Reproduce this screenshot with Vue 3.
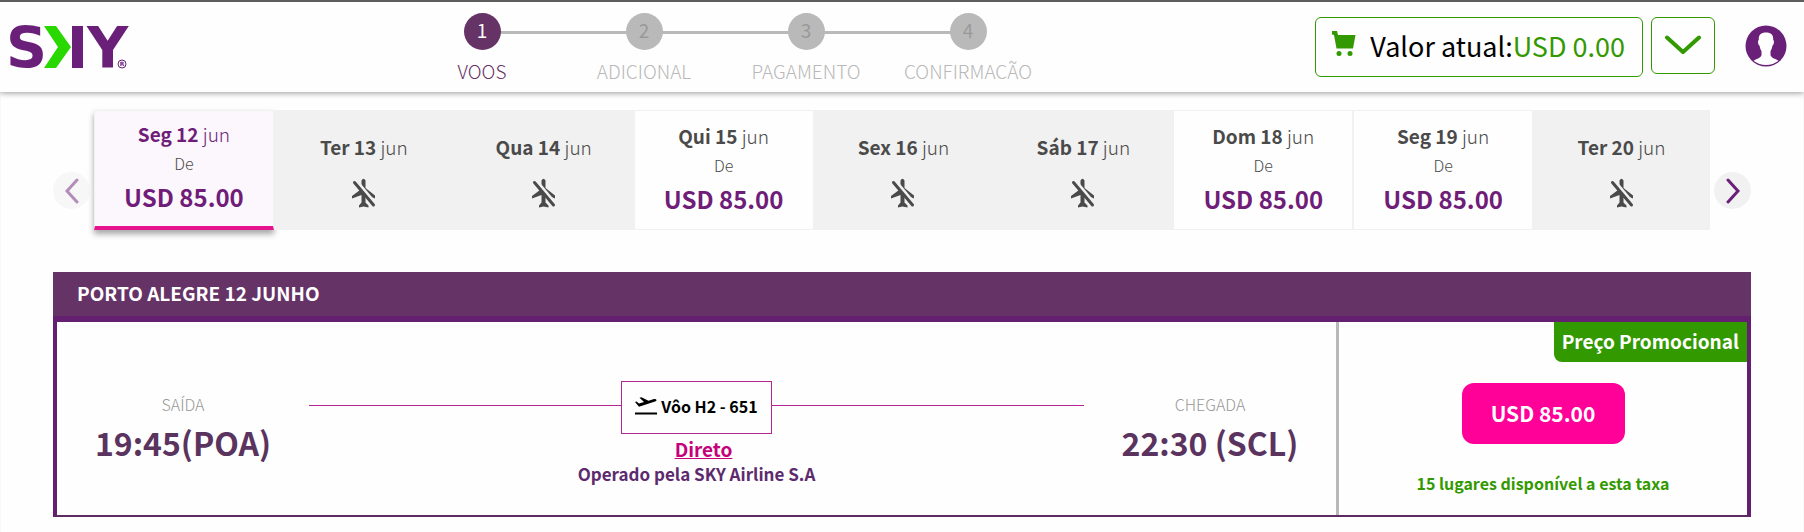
<script setup>
const steps = ['VOOS', 'ADICIONAL', 'PAGAMENTO', 'CONFIRMACÃO']

const days = [
  { day: 'Seg 12', price: 'USD 85.00', selected: true },
  { day: 'Ter 13' },
  { day: 'Qua 14' },
  { day: 'Qui 15', price: 'USD 85.00' },
  { day: 'Sex 16' },
  { day: 'Sáb 17' },
  { day: 'Dom 18', price: 'USD 85.00' },
  { day: 'Seg 19', price: 'USD 85.00' },
  { day: 'Ter 20' },
]
</script>

<template>
  <div class="page">
    <header class="header">
      <a class="logo" href="#" aria-label="SKY">
        <svg width="128" height="70" viewBox="-6 -10 128 70">
          <text x="-2" y="45" class="logo-letter">S</text>
          <path d="M36 3H48L63 24L48 45H36L50 24Z" fill="#28d800" />
          <rect x="64" y="3" width="11" height="42" fill="#6a1f78" />
          <text x="79" y="45" class="logo-letter">Y</text>
          <circle cx="114" cy="41" r="4" fill="#fff" stroke="#6a1f78" />
          <text x="114" y="43" class="logo-mark">R</text>
        </svg>
      </a>

      <ol class="steps">
        <li v-for="(step, i) in steps" :key="step" class="step" :class="{ active: i === 0 }">
          <span class="step-number">{{ i + 1 }}</span>
          <span class="step-label">{{ step }}</span>
        </li>
      </ol>

      <div class="actions">
        <div class="total">
          <svg class="cart" width="24" height="26" viewBox="0 0 24 26" fill="#339900">
            <path d="M0 0H5L6 4H23.5L21 17.5H4.5L2 4L0 3.5Z" />
            <circle cx="7" cy="22.500" r="2.500" />
            <circle cx="18" cy="22.500" r="2.500" />
          </svg>
          <span>Valor atual:<span class="amount">USD 0.00</span></span>
        </div>
        <button class="expand" type="button" aria-label="Detalhes">
          <svg width="38" height="21" viewBox="0 0 38 21" fill="none" stroke="#339900" stroke-width="4" stroke-linecap="round" stroke-linejoin="round">
            <path d="M3 2.500L19 17L35 2.500" />
          </svg>
        </button>
        <button class="avatar" type="button" aria-label="Conta">
          <svg width="42" height="42" viewBox="0 0 42 42">
            <circle cx="21" cy="21" r="20.500" fill="#6a1f78" />
            <path d="M21 7.500C26 7.500 28.500 9.500 28.200 15C29.500 15.500 29 20 27.500 20.500C27 23 26.500 25 25.500 26V30C26 33 30 33.500 33.500 35.800C26.500 41.500 15.500 41.500 8.500 35.800C12 33.500 16 33 16.500 30V26C15.500 25 15 23 14.500 20.500C13 20 12.500 15.500 13.800 15C13.500 9.500 16 7.500 21 7.500Z" fill="#fff" />
          </svg>
        </button>
      </div>
    </header>

    <main class="content">
      <section class="carousel">
        <button class="arrow faded" type="button" aria-label="Dias anteriores">
          <svg width="14" height="26" viewBox="0 0 14 26" fill="none" stroke="#6a1f78" stroke-width="3" stroke-linecap="round"><path d="M12 2L2 13L12 24" /></svg>
        </button>
        <div class="days">
          <button
            v-for="d in days"
            :key="d.day"
            type="button"
            class="day"
            :class="{ selected: d.selected, empty: !d.price }"
          >
            <span class="date"><b>{{ d.day }}</b> jun</span>
            <template v-if="d.price">
              <span class="from">De</span>
              <span class="fare">{{ d.price }}</span>
            </template>
            <svg v-else class="no-flight" width="26" height="30" viewBox="0 0 26 30" fill="#4a4a4a">
              <path d="M10.500 8V2.500Q12.500-1 14.500 2.500V10L24 17.500V20.500L14.500 16.500V24.500L17.500 27.500V29.500L12.500 28.500L8 29.500V27.500L10.500 24.500V17L1 20.500V18L9 12Z" />
              <path d="M5 3L25 27" stroke="#f1f1f1" stroke-width="4" />
              <path d="M3.500 4.500L22.500 27" stroke="#4a4a4a" stroke-width="3" stroke-linecap="round" />
            </svg>
          </button>
        </div>
        <button class="arrow" type="button" aria-label="Próximos dias">
          <svg width="14" height="26" viewBox="0 0 14 26" fill="none" stroke="#6a1f78" stroke-width="3" stroke-linecap="round"><path d="M2 2L12 13L2 24" /></svg>
        </button>
      </section>

      <section class="panel">
        <h2 class="panel-title">PORTO ALEGRE 12 JUNHO</h2>
        <div class="flight">
          <div class="itinerary">
            <div class="stop">
              <span class="stop-label">SAÍDA</span>
              <strong class="stop-time">19:45(POA)</strong>
            </div>
            <div class="route">
              <div class="route-line">
                <div class="flight-box">
                  <svg width="22" height="18" viewBox="0 0 22 18">
                    <path d="M0 15.500H22V17.500H0Z" />
                    <path d="M0 5L1.500 4.500L4 6.500L9 5L4.500 0.800L6.500 0.200L13.500 3.800L19 2Q21.500 1.800 21.500 3.200Q21.500 4 20 4.500L4 9.800Z" />
                  </svg>
                  <span>Vôo H2 - 651</span>
                </div>
              </div>
              <a class="direct" href="#">Direto</a>
              <span class="operator">Operado pela SKY Airline S.A</span>
            </div>
            <div class="stop">
              <span class="stop-label">CHEGADA</span>
              <strong class="stop-time">22:30 (SCL)</strong>
            </div>
          </div>
          <div class="price">
            <span class="promo">Preço Promocional</span>
            <button class="buy" type="button">USD 85.00</button>
            <span class="seats">15 lugares disponível a esta taxa</span>
          </div>
        </div>
      </section>
    </main>
  </div>
</template>

<style>
body {
  margin: 0;
  background: #fefefe;
}
</style>

<style scoped>
.page {
  min-height: 100vh;
  box-sizing: border-box;
  font-family: "Noto Sans CJK SC", "Noto Sans", sans-serif;
  color: #4a4a4a;
  border: solid #f8f8f8;
  border-width: 0 1px;
}
button {
  font-family: inherit;
  padding: 0;
  border: 0;
  background: none;
  color: inherit;
  cursor: pointer;
}
svg {
  display: block;
  flex: none;
}

.header {
  display: flex;
  align-items: flex-start;
  height: 90px;
  margin: 0 -1px;
  border-top: 2px solid #5f5d60;
  background: #fefefe;
  box-shadow: 0 1px 6px rgba(0, 0, 0, 0.4);
}
.logo {
  flex: 0 0 399px;
  padding: 11px 0 0 2px;
}
.logo-letter {
  font: bold 57px "DejaVu Sans", sans-serif;
  fill: #6a1f78;
}
.logo-mark {
  font: bold 6px "DejaVu Sans", sans-serif;
  fill: #6a1f78;
  text-anchor: middle;
}

.steps {
  display: flex;
  margin: 0;
  padding: 11px 0 0;
  list-style: none;
}
.step {
  position: relative;
  display: flex;
  flex-direction: column;
  align-items: center;
  gap: 7px;
  width: 162px;
  color: #b9b9b9;
}
.step + .step::before {
  content: "";
  position: absolute;
  top: 18px;
  right: 50%;
  width: 100%;
  height: 3px;
  background: #b9b9b9;
}
.step-number {
  position: relative;
  z-index: 1;
  width: 37px;
  height: 37px;
  border-radius: 50%;
  background: #b9b9b9;
  color: #999;
  font-size: 19px;
  line-height: 34px;
  text-align: center;
}
.step-label {
  font-size: 19px;
  font-weight: 300;
  line-height: 28px;
}
.active {
  color: #663366;
}
.active .step-number {
  background: #663366;
  color: #fff;
}
.step.active {
  z-index: 1;
}

.actions {
  display: flex;
  align-items: flex-start;
  margin-left: auto;
  padding: 15px 17px 0 0;
}
.total {
  display: flex;
  gap: 14px;
  height: 58px;
  padding: 0 17px 0 16px;
  border: 1px solid #339900;
  border-radius: 6px;
  color: #000;
  font-size: 27px;
  line-height: 56px;
}
.cart {
  margin-top: 13px;
}
.amount {
  color: #339900;
}
.expand {
  display: flex;
  align-items: center;
  justify-content: center;
  width: 64px;
  height: 57px;
  margin-left: 8px;
  border: 1px solid #339900;
  border-radius: 6px;
}
.avatar {
  margin: 8px 0 0 30px;
}

.content {
  padding: 18px 52px 15px;
}
.carousel {
  display: flex;
  gap: 4px;
  height: 120px;
}
.arrow {
  display: flex;
  align-items: center;
  justify-content: center;
  flex: none;
  width: 37px;
  height: 37px;
  margin-top: 62px;
  border-radius: 50%;
  background: #f1f1f1;
}
.faded {
  opacity: 0.5;
}
.days {
  display: grid;
  grid-template-columns: repeat(8, 180fr) 177fr;
  flex: 1;
}
.day {
  display: flex;
  flex-direction: column;
  align-items: center;
  box-sizing: border-box;
  padding-top: 11px;
  border: 1px solid #f1f1f1;
  background: #fefefe;
}
.date {
  font-size: 19px;
  font-weight: 300;
  line-height: 28px;
}
.date b {
  font-weight: 700;
}
.from {
  font-size: 16px;
  font-weight: 300;
  line-height: 30px;
}
.fare {
  color: #6f1d78;
  font-size: 24px;
  font-weight: 700;
  line-height: 38px;
}
.empty {
  padding-top: 22px;
  background: #f1f1f1;
}
.no-flight {
  margin-top: 17px;
}
.selected {
  padding-top: 9px;
  border-bottom: 4px solid #e6138f;
  background: #fcf7fc;
  box-shadow: 0 4px 6px rgba(0, 0, 0, 0.35);
}
.selected .date {
  color: #6f1d78;
}

.panel {
  margin-top: 42px;
}
.panel-title {
  margin: 0;
  padding: 0 24px 2px;
  background: #663366;
  color: #fff;
  font-size: 19px;
  font-weight: 700;
  line-height: 42px;
}
.flight {
  display: flex;
  height: 193px;
  border: solid #641f70;
  border-width: 6px 4px 2px;
  border-bottom-color: #5d2a62;
}
.itinerary {
  display: grid;
  grid-template-columns: 252px 1fr 252px;
  flex: 1;
}
.stop {
  display: flex;
  flex-direction: column;
  align-items: center;
  padding-top: 68px;
}
.stop-label {
  color: #999;
  font-size: 16px;
  font-weight: 300;
  line-height: 28px;
}
.stop-time {
  color: #5b335f;
  font-size: 32px;
  font-weight: 700;
  line-height: 48px;
}
.route {
  display: flex;
  flex-direction: column;
  align-items: center;
  padding-top: 59px;
}
.route-line {
  display: flex;
  align-self: stretch;
}
.route-line::before,
.route-line::after {
  content: "";
  flex: 1;
  height: 1px;
  margin-top: 24px;
  background: #b5268f;
}
.flight-box {
  display: flex;
  align-items: center;
  gap: 4px;
  box-sizing: border-box;
  height: 53px;
  padding: 0 13px 4px;
  border: 1px solid #b5268f;
  color: #000;
  font-size: 16px;
  font-weight: 700;
}
.direct {
  margin: 1px 0 0 14px;
  color: #c4007a;
  font-size: 19px;
  font-weight: 700;
  line-height: 28px;
}
.operator {
  color: #5d2a6e;
  font-size: 17px;
  font-weight: 700;
  line-height: 22px;
}
.price {
  display: flex;
  flex-direction: column;
  align-items: center;
  flex: 0 0 408px;
  border-left: 3px solid #b9b9b9;
}
.promo {
  align-self: flex-end;
  padding: 0 8px 2px;
  border-bottom-left-radius: 8px;
  background: #339900;
  color: #fff;
  font-size: 19px;
  font-weight: 700;
  line-height: 38px;
}
.buy {
  width: 163px;
  height: 61px;
  margin-top: 21px;
  padding-bottom: 2px;
  border-radius: 12px;
  background: #ff0099;
  color: #fff;
  font-size: 21px;
  font-weight: 700;
}
.seats {
  margin-top: 25px;
  color: #339900;
  font-size: 16px;
  font-weight: 700;
  line-height: 28px;
}
</style>
